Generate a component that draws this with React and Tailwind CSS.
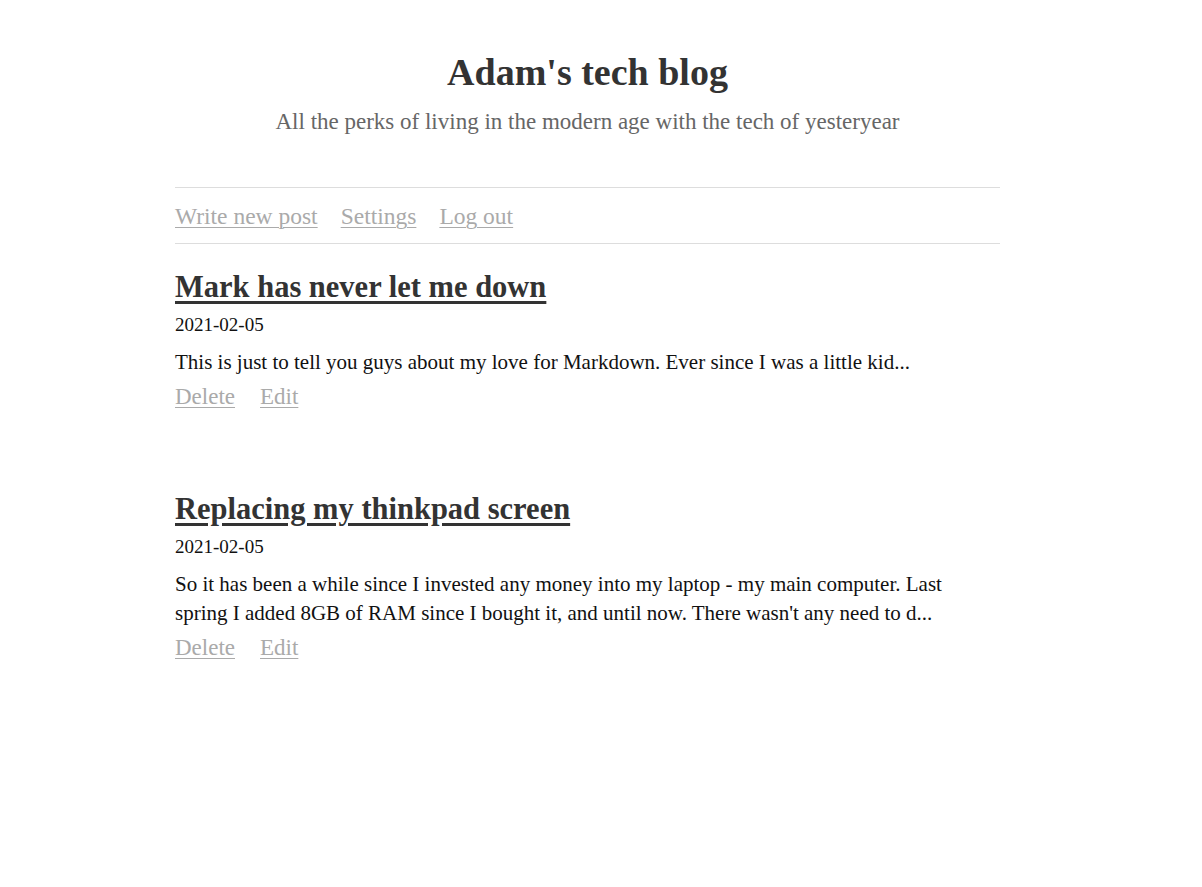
const posts = [
  {
    title: "Mark has never let me down",
    date: "2021-02-05",
    excerpt:
      "This is just to tell you guys about my love for Markdown. Ever since I was a little kid...",
  },
  {
    title: "Replacing my thinkpad screen",
    date: "2021-02-05",
    excerpt:
      "So it has been a while since I invested any money into my laptop - my main computer. Last spring I added 8GB of RAM since I bought it, and until now. There wasn't any need to d...",
  },
];

const serif = { fontFamily: '"Liberation Serif", "DejaVu Serif", serif' };

export default function App() {
  return (
    <div className="min-h-screen bg-white text-[#222]" style={serif}>
      <div className="ml-[175px] w-[825px]">
        {/* Header */}
        <header className="pt-[50px] text-center">
          <h1 className="text-[38px] leading-[44px] font-bold text-[#333]">
            Adam's tech blog
          </h1>
          <p className="mt-[14px] text-[23px] leading-[28px] text-[#666]">
            All the perks of living in the modern age with the tech of yesteryear
          </p>
        </header>

        {/* Nav */}
        <nav className="mt-[51px] border-y border-[#ddd] pt-[14px] pb-[13px] flex gap-[23px] text-[23.5px] leading-[28px] text-[#aaa]">
          <a href="#" className="underline underline-offset-[3px] decoration-1">Write new post</a>
          <a href="#" className="underline underline-offset-[3px] decoration-1">Settings</a>
          <a href="#" className="underline underline-offset-[3px] decoration-1">Log out</a>
        </nav>

        {/* Posts */}
        <main className="pt-[25px] flex flex-col gap-[80px]">
          {posts.map((post) => (
            <article key={post.title}>
              <h2 className="text-[30.5px] leading-[36px] font-bold text-[#333]">
                <a href="#" className="underline underline-offset-[4px]">{post.title}</a>
              </h2>
              <div className="mt-[8px] text-[19px] leading-[24px] text-[#111]">{post.date}</div>
              <p className="mt-[11px] max-w-[800px] text-[21px] leading-[29px] text-[#111]">{post.excerpt}</p>
              <div className="mt-[6px] flex gap-[25px] text-[23px] leading-[28px] text-[#aaa]">
                <a href="#" className="underline underline-offset-[3px] decoration-1">Delete</a>
                <a href="#" className="underline underline-offset-[3px] decoration-1">Edit</a>
              </div>
            </article>
          ))}
        </main>
      </div>
    </div>
  );
}
